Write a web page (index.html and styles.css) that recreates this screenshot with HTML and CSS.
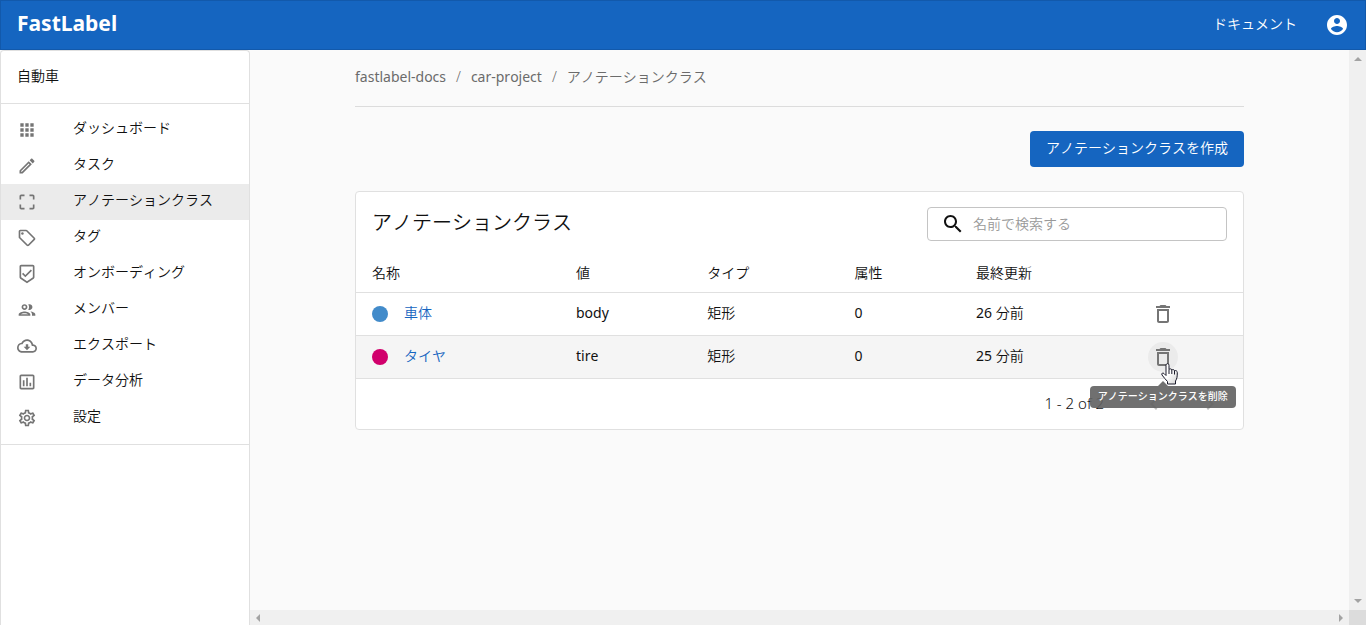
FILE: index.html
```html
<!DOCTYPE html>
<html lang="ja">
<head>
<meta charset="utf-8">
<meta name="viewport" content="width=device-width, initial-scale=1">
<title>アノテーションクラス - FastLabel</title>
<link rel="stylesheet" href="styles.css">
</head>
<body>
<div class="app">
  <header class="topbar">
    <a class="brand" href="#">FastLabel</a>
    <nav class="topnav">
      <a class="doc-link" href="#">ドキュメント</a>
      <button class="account" type="button" aria-label="アカウント">
        <svg class="icon-24" viewBox="0 0 24 24"><path d="M12 2C6.48 2 2 6.48 2 12s4.48 10 10 10 10-4.48 10-10S17.52 2 12 2zm0 3c1.66 0 3 1.34 3 3s-1.34 3-3 3-3-1.34-3-3 1.34-3 3-3zm0 14.2c-2.5 0-4.71-1.28-6-3.22.03-1.99 4-3.08 6-3.08 1.99 0 5.97 1.09 6 3.08-1.29 1.94-3.5 3.22-6 3.22z"/></svg>
      </button>
    </nav>
  </header>

  <div class="body">
    <aside class="sidebar">
      <div class="project">自動車</div>
      <nav class="menu">
        <a class="item" href="#"><svg class="icon-20" viewBox="0 0 24 24"><path d="M4 8h4V4H4v4zm6 12h4v-4h-4v4zm-6 0h4v-4H4v4zm0-6h4v-4H4v4zm6 0h4v-4h-4v4zm6-10v4h4V4h-4zm-6 4h4V4h-4v4zm6 6h4v-4h-4v4zm0 6h4v-4h-4v4z"/></svg><span class="label">ダッシュボード</span></a>
        <a class="item" href="#"><svg class="icon-20" viewBox="0 0 24 24"><path d="M14.06 9.02l.92.92L5.92 19H5v-.92l9.06-9.06M17.66 3c-.25 0-.51.1-.7.29l-1.83 1.83 3.75 3.75 1.83-1.83c.39-.39.39-1.02 0-1.41l-2.34-2.34c-.2-.2-.45-.29-.71-.29zm-3.6 3.19L3 17.25V21h3.75L17.81 9.94l-3.75-3.75z"/></svg><span class="label">タスク</span></a>
        <a class="item selected" href="#" aria-current="page"><svg class="icon-20" viewBox="0 0 24 24"><path d="M3 5v4h2V5h4V3H5c-1.1 0-2 .9-2 2zm2 10H3v4c0 1.1.9 2 2 2h4v-2H5v-4zm14 4h-4v2h4c1.1 0 2-.9 2-2v-4h-2v4zm0-16h-4v2h4v4h2V5c0-1.1-.9-2-2-2z"/></svg><span class="label">アノテーションクラス</span></a>
        <a class="item" href="#"><svg class="icon-20" viewBox="0 0 24 24"><path d="M21.41 11.58l-9-9C12.05 2.22 11.55 2 11 2H4c-1.1 0-2 .9-2 2v7c0 .55.22 1.05.59 1.42l9 9c.36.36.86.58 1.41.58s1.05-.22 1.41-.59l7-7c.37-.36.59-.86.59-1.41s-.23-1.06-.59-1.42zM13 20.01L4 11V4h7v-.01l9 9-7 7.02z"/><circle cx="6.5" cy="6.5" r="1.5"/></svg><span class="label">タグ</span></a>
        <a class="item" href="#"><svg class="icon-20" viewBox="0 0 24 24"><path d="M19 1H5c-1.1 0-1.99.9-1.99 2L3 15.93c0 .69.35 1.3.88 1.66L12 23l8.11-5.41c.53-.36.88-.97.88-1.66L21 3c0-1.1-.9-2-2-2zm-7 19.6l-7-4.66V3h14v12.93l-7 4.67zm-2.01-7.42l-2.58-2.59L6 12l4 4 8-8-1.42-1.42z"/></svg><span class="label">オンボーディング</span></a>
        <a class="item" href="#"><svg class="icon-20" viewBox="0 0 24 24"><path d="M9 13.75c-2.34 0-7 1.17-7 3.5V19h14v-1.75c0-2.33-4.66-3.5-7-3.5zM4.34 17c.84-.58 2.87-1.25 4.66-1.25s3.82.67 4.66 1.25H4.34zM9 12c1.93 0 3.5-1.57 3.5-3.5S10.93 5 9 5 5.5 6.57 5.5 8.5 7.07 12 9 12zm0-5c.83 0 1.5.67 1.5 1.5S9.83 10 9 10s-1.5-.67-1.5-1.5S8.17 7 9 7zm7.04 6.81c1.16.84 1.96 1.96 1.96 3.44V19h4v-1.75c0-2.02-3.5-3.17-5.96-3.44zM15 12c1.93 0 3.5-1.57 3.5-3.5S16.93 5 15 5c-.54 0-1.04.13-1.5.35.63.89 1 1.98 1 3.15s-.37 2.26-1 3.15c.46.22.96.35 1.5.35z"/></svg><span class="label">メンバー</span></a>
        <a class="item" href="#"><svg class="icon-20" viewBox="0 0 24 24"><path d="M19.35 10.04C18.67 6.59 15.64 4 12 4 9.11 4 6.6 5.64 5.35 8.04 2.34 8.36 0 10.91 0 14c0 3.31 2.69 6 6 6h13c2.76 0 5-2.24 5-5 0-2.64-2.05-4.78-4.65-4.96zM19 18H6c-2.21 0-4-1.79-4-4 0-2.05 1.53-3.76 3.56-3.97l1.07-.11.5-.95C8.08 7.14 9.94 6 12 6c2.62 0 4.88 1.86 5.39 4.43l.3 1.5 1.53.11c1.56.1 2.78 1.41 2.78 2.96 0 1.65-1.35 3-3 3zm-5.55-8h-2.9v3H8l4 4 4-4h-2.55z"/></svg><span class="label">エクスポート</span></a>
        <a class="item" href="#"><svg class="icon-20" viewBox="0 0 24 24"><path d="M19 3H5c-1.1 0-2 .9-2 2v14c0 1.1.9 2 2 2h14c1.1 0 2-.9 2-2V5c0-1.1-.9-2-2-2zm0 16H5V5h14v14zM7 10h2v7H7zm4-3h2v10h-2zm4 6h2v4h-2z"/></svg><span class="label">データ分析</span></a>
        <a class="item" href="#"><svg class="icon-20" viewBox="0 0 24 24"><path d="M19.43 12.98c.04-.32.07-.64.07-.98 0-.34-.03-.66-.07-.98l2.11-1.65c.19-.15.24-.42.12-.64l-2-3.46c-.09-.16-.26-.25-.44-.25-.06 0-.12.01-.17.03l-2.49 1c-.52-.4-1.08-.73-1.69-.98l-.38-2.65C14.46 2.18 14.25 2 14 2h-4c-.25 0-.46.18-.49.42l-.38 2.65c-.61.25-1.17.59-1.69.98l-2.49-1c-.06-.02-.12-.03-.18-.03-.17 0-.34.09-.43.25l-2 3.46c-.13.22-.07.49.12.64l2.11 1.65c-.04.32-.07.65-.07.98 0 .33.03.66.07.98l-2.11 1.65c-.19.15-.24.42-.12.64l2 3.46c.09.16.26.25.44.25.06 0 .12-.01.17-.03l2.49-1c.52.4 1.08.73 1.69.98l.38 2.65c.03.24.24.42.49.42h4c.25 0 .46-.18.49-.42l.38-2.65c.61-.25 1.17-.59 1.69-.98l2.49 1c.06.02.12.03.18.03.17 0 .34-.09.43-.25l2-3.46c.12-.22.07-.49-.12-.64l-2.11-1.65zm-1.98-1.71c.04.31.05.52.05.73 0 .21-.02.43-.05.73l-.14 1.13.89.7 1.08.84-.7 1.21-1.27-.51-1.04-.42-.9.68c-.43.32-.84.56-1.25.73l-1.06.43-.16 1.13-.2 1.35h-1.4l-.19-1.35-.16-1.13-1.06-.43c-.43-.18-.83-.41-1.23-.71l-.91-.7-1.06.43-1.27.51-.7-1.21 1.08-.84.89-.7-.14-1.13c-.03-.31-.05-.54-.05-.74s.02-.43.05-.73l.14-1.13-.89-.7-1.08-.84.7-1.21 1.27.51 1.04.42.9-.68c.43-.32.84-.56 1.25-.73l1.06-.43.16-1.13.2-1.35h1.39l.19 1.35.16 1.13 1.06.43c.43.18.83.41 1.23.71l.91.7 1.06-.43 1.27-.51.7 1.21-1.07.85-.89.7.14 1.13zM12 8c-2.21 0-4 1.79-4 4s1.79 4 4 4 4-1.79 4-4-1.79-4-4-4zm0 6c-1.1 0-2-.9-2-2s.9-2 2-2 2 .9 2 2-.9 2-2 2z"/></svg><span class="label">設定</span></a>
      </nav>
    </aside>

    <div class="viewport">
      <main class="content">
        <nav class="crumbs" aria-label="パンくず">
          <a class="latin" href="#">fastlabel-docs</a><span>/</span><a class="latin" href="#">car-project</a><span>/</span><a href="#">アノテーションクラス</a>
        </nav>
        <div class="actions"><button class="primary" type="button">アノテーションクラスを作成</button></div>

        <section class="card">
          <div class="toolbar">
            <h1 class="title">アノテーションクラス</h1>
            <label class="search">
              <svg class="icon-24" viewBox="0 0 24 24"><path d="M15.5 14h-.79l-.28-.27C15.41 12.59 16 11.11 16 9.5 16 5.91 13.09 3 9.5 3S3 5.91 3 9.5 5.91 16 9.5 16c1.61 0 3.09-.59 4.23-1.57l.27.28v.79l5 4.99L20.49 19l-4.99-5zm-6 0C7.01 14 5 11.99 5 9.5S7.01 5 9.5 5 14 7.01 14 9.5 11.99 14 9.5 14z"/></svg>
              <input type="text" placeholder="名前で検索する" aria-label="名前で検索する">
            </label>
          </div>
          <table class="classes">
            <colgroup><col class="c-name"><col class="c-value"><col class="c-type"><col class="c-attr"><col class="c-date"><col></colgroup>
            <thead>
              <tr><th>名称</th><th>値</th><th>タイプ</th><th>属性</th><th>最終更新</th><th></th></tr>
            </thead>
            <tbody>
              <tr>
                <td><div class="name"><i class="dot blue"></i><a href="#">車体</a></div></td>
                <td class="latin">body</td><td>矩形</td><td class="latin">0</td><td><span class="latin">26</span> 分前</td>
                <td class="act"><button class="trash" type="button" aria-label="削除"><svg class="icon-24" viewBox="0 0 24 24"><path d="M6 19c0 1.1.9 2 2 2h8c1.1 0 2-.9 2-2V7H6v12zM8 9h8v10H8V9zm7.5-5l-1-1h-5l-1 1H5v2h14V4z"/></svg></button></td>
              </tr>
              <tr class="hovered">
                <td><div class="name"><i class="dot pink"></i><a href="#">タイヤ</a></div></td>
                <td class="latin">tire</td><td>矩形</td><td class="latin">0</td><td><span class="latin">25</span> 分前</td>
                <td class="act"><button class="trash active" type="button" aria-label="削除" aria-describedby="tip"><svg class="icon-24" viewBox="0 0 24 24"><path d="M6 19c0 1.1.9 2 2 2h8c1.1 0 2-.9 2-2V7H6v12zM8 9h8v10H8V9zm7.5-5l-1-1h-5l-1 1H5v2h14V4z"/></svg>
                  <span class="tooltip" id="tip" role="tooltip">アノテーションクラスを削除</span>
                  <svg class="cursor" viewBox="0 0 17 22"><defs><linearGradient id="hand" x1="0" y1="0" x2="1" y2="1"><stop offset="0.5" stop-color="#fff"/><stop offset="1" stop-color="#d0d0d0"/></linearGradient></defs><path fill="url(#hand)" d="M5 2.500C5 0 8 0 8 2.500V6.500c.6-1 2.600-.8 2.800.5.8-.9 2.500-.5 2.700.8 1.200-.7 2.800.1 2.800 1.700 0 4-.2 6-1.800 8.500v3H6.500v-2.500C4.500 16.500 3 14.500 1 12c-1-1.800 1-2.500 2-1.500l2 2z"/><path class="fingers" d="M8 6.500v4.500M10.800 7v4M13.500 8v3.500"/></svg>
                </button></td>
              </tr>
            </tbody>
          </table>
          <div class="pager">
            <span class="range">1 - 2 of 2</span>
            <button class="page" type="button" aria-label="前のページ" disabled><svg class="icon-24" viewBox="0 0 24 24"><path d="M15.41 7.410L14 6l-6 6 6 6 1.410-1.410L10.830 12z"/></svg></button>
            <button class="page" type="button" aria-label="次のページ" disabled><svg class="icon-24" viewBox="0 0 24 24"><path d="M10 6L8.590 7.410 13.170 12l-4.580 4.590L10 18l6-6z"/></svg></button>
          </div>
        </section>
      </main>
      <div class="bar vertical"><i class="arrow up"></i><i class="arrow down"></i></div>
      <div class="bar horizontal"><i class="arrow left"></i><i class="arrow right"></i></div>
      <div class="corner"></div>
    </div>
  </div>
</div>
</body>
</html>
```

FILE: styles.css
```css
* { box-sizing: border-box; }
body {
  margin: 0;
  background: #fafafa;
  color: #111;
  font: 350 14px/20px "Noto Sans", "Noto Sans CJK JP", sans-serif;
  font-kerning: none;
}
a { color: inherit; text-decoration: none; }
button, input { font: inherit; font-kerning: none; color: inherit; border: 0; background: none; padding: 0; }
svg { display: block; flex: none; fill: currentColor; }
.icon-24 { width: 24px; height: 24px; }
.icon-20 { width: 20px; height: 20px; }

.app { display: flex; flex-direction: column; height: 100vh; overflow: hidden; }
.topbar {
  display: flex;
  align-items: center;
  justify-content: space-between;
  height: 50px;
  padding: 0 16px;
  border: 1px solid #1259ab;
  background: #1565c0;
  color: #fff;
}
.brand { font-size: 21px; line-height: 28px; font-weight: 700; padding-bottom: 4px; }
.topnav { display: flex; align-items: center; gap: 28px; }
.doc-link { padding-bottom: 3px; }

.body { display: flex; flex: 1; min-height: 0; }
.sidebar {
  flex: none;
  width: 250px;
  border: 1px solid #e0e0e0;
  border-bottom: 0;
  border-radius: 4px 4px 0 0;
  background: #fff;
}
.project { padding: 15px 16px 17px; border-bottom: 1px solid #e0e0e0; }
.menu { padding: 8px 0; border-bottom: 1px solid #e0e0e0; }
.item { display: flex; align-items: center; gap: 36px; height: 36px; padding: 0 16px; }
.item svg { color: #757575; }
.label { padding-bottom: 4px; }
.selected { background: #ebebeb; }

.viewport {
  flex: 1;
  min-width: 0;
  display: grid;
  grid-template-columns: 1fr 17px;
  grid-template-rows: 1fr 15px;
}
.content { min-width: 0; padding: 17px 105px; }
.crumbs {
  display: flex;
  gap: 10px;
  padding-bottom: 19px;
  border-bottom: 1px solid #dcdcdc;
  color: #6b6b6b;
}
.latin, .classes .latin { font-weight: 400; }
.actions { display: flex; justify-content: flex-end; padding: 24px 0; }
.primary {
  height: 36px;
  padding: 0 16px 3px;
  border-radius: 4px;
  background: #1565c0;
  color: #fff;
}
.card { border: 1px solid #e0e0e0; border-radius: 4px; background: #fff; }
.toolbar { display: flex; align-items: center; justify-content: space-between; height: 64px; padding: 0 16px; }
.title { margin: 0; padding-bottom: 3px; font-size: 20px; line-height: 28px; font-weight: 350; }
.search {
  display: flex;
  align-items: center;
  gap: 8px;
  width: 300px;
  height: 34px;
  padding: 0 13px;
  border: 1px solid #c4c4c4;
  border-radius: 4px;
}
.search input { flex: 1; min-width: 0; outline: 0; }
.search input::placeholder { color: #999; opacity: 1; }

.classes { width: 100%; table-layout: fixed; border-collapse: separate; border-spacing: 0; }
.c-name { width: 23%; }
.c-value { width: 14.8%; }
.c-type { width: 16.6%; }
.c-attr { width: 13.7%; }
.c-date { width: 13.8%; }
.classes th, .classes td { padding: 0 16px; border-bottom: 1px solid #e0e0e0; text-align: left; font-weight: 350; }
.classes th { height: 37px; padding-bottom: 3px; }
.classes td { height: 43px; padding-bottom: 2px; }
.hovered td { background: #f5f5f5; }
.name { display: flex; align-items: flex-end; gap: 16px; color: #1565c0; }
.dot { width: 16px; height: 16px; margin-bottom: 1px; border-radius: 50%; }
.blue { background: #428bca; }
.pink { background: #d1006c; }
.classes .act { padding: 0; }
.trash { position: relative; display: block; margin: 0 auto; padding: 3px; border-radius: 50%; color: #757575; }
.active { background: #ebebeb; }
.tooltip {
  position: absolute;
  top: 44px;
  left: 50%;
  z-index: 1;
  transform: translateX(-50%);
  padding: 3px 8px 5px;
  border-radius: 4px;
  background: rgba(97, 97, 97, 0.9);
  color: #fff;
  font-size: 10px;
  line-height: 14px;
  font-weight: 500;
  white-space: nowrap;
}
.tooltip::before {
  content: "";
  position: absolute;
  bottom: 100%;
  left: 50%;
  margin-left: -5px;
  border: 5px solid transparent;
  border-top: 0;
  border-bottom-color: rgba(97, 97, 97, 0.9);
}
.cursor { position: absolute; top: 21px; left: 13px; z-index: 2; width: 17px; height: 22px; stroke: #1a1a2a; stroke-width: 1; }
.fingers { fill: none; }

.pager { display: flex; align-items: center; justify-content: flex-end; gap: 8px; height: 50px; padding-right: 9px; }
.range { padding: 0 18px 2px 0; font-size: 15px; }
.page { display: grid; place-items: center; width: 48px; height: 48px; color: rgba(0, 0, 0, 0.26); }

.bar { display: flex; align-items: center; justify-content: space-between; background: #f0f0f0; }
.vertical { flex-direction: column; padding: 7px 0; }
.horizontal { padding: 0 6px; }
.corner { background: #dcdcdc; }
.arrow { border: 4px solid transparent; }
.up { border-top: 0; border-bottom-color: #a3a3a3; }
.down { border-bottom: 0; border-top-color: #a3a3a3; }
.left { border-left: 0; border-right-color: #a3a3a3; }
.right { border-right: 0; border-left-color: #a3a3a3; }
```
